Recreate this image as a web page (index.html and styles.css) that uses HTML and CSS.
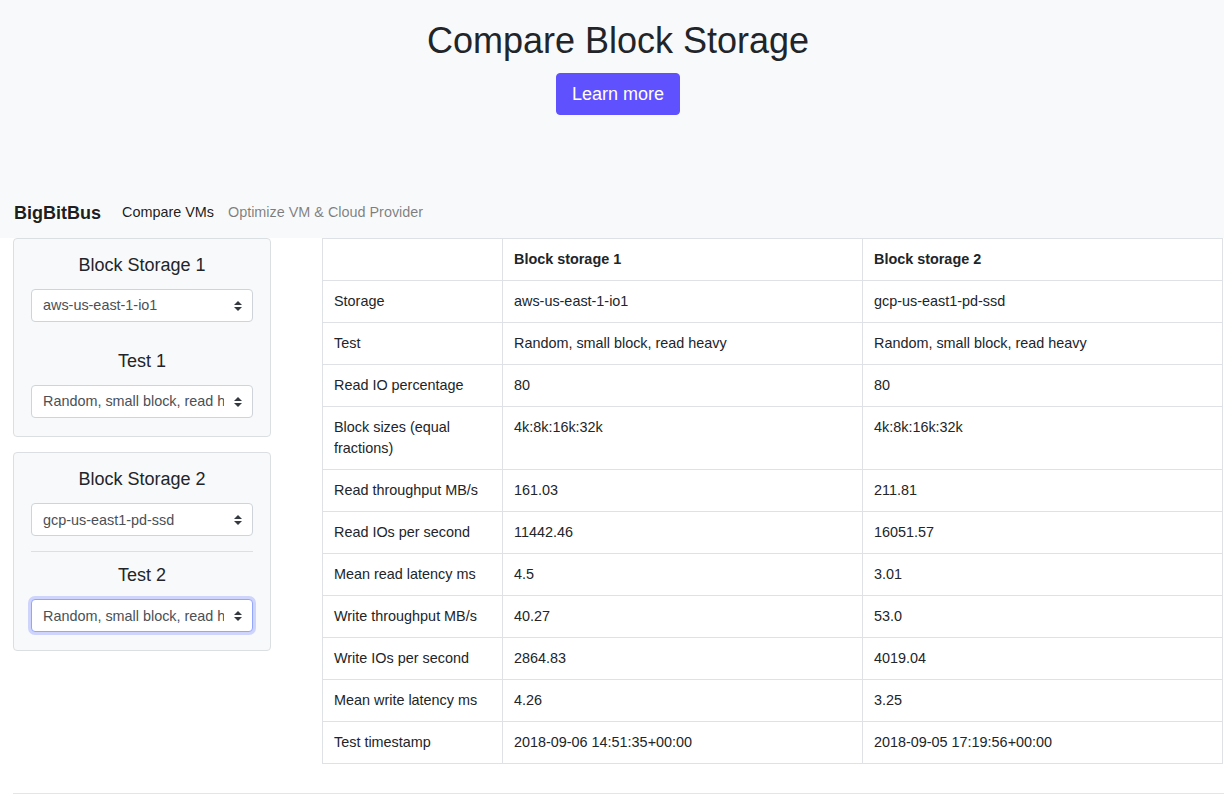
FILE: index.html
```html
<!DOCTYPE html>
<html lang="en">
<head>
<meta charset="utf-8">
<title>Compare Block Storage</title>
<link rel="stylesheet" href="styles.css">
</head>
<body>
<header class="hero">
  <h1 class="hero-title">Compare Block Storage</h1>
  <a class="btn-primary" href="#">Learn more</a>
</header>
<nav class="navbar">
  <a class="brand" href="#">BigBitBus</a>
  <a class="nav-link active" href="#">Compare VMs</a>
  <a class="nav-link" href="#">Optimize VM &amp; Cloud Provider</a>
</nav>
<main class="content">
  <aside class="sidebar">
    <section class="card">
      <h2 class="card-title">Block Storage 1</h2>
      <div class="select-wrap">
        <select class="custom-select"><option>aws-us-east-1-io1</option></select>
        <svg class="select-arrow" viewBox="0 0 4 5" width="8" height="10"><path d="M2 0L0 2h4zm0 5L0 3h4z"/></svg>
      </div>
      <hr class="divider hidden">
      <h2 class="card-title">Test 1</h2>
      <div class="select-wrap">
        <select class="custom-select"><option>Random, small block, read heavy</option></select>
        <svg class="select-arrow" viewBox="0 0 4 5" width="8" height="10"><path d="M2 0L0 2h4zm0 5L0 3h4z"/></svg>
      </div>
    </section>
    <section class="card">
      <h2 class="card-title">Block Storage 2</h2>
      <div class="select-wrap">
        <select class="custom-select"><option>gcp-us-east1-pd-ssd</option></select>
        <svg class="select-arrow" viewBox="0 0 4 5" width="8" height="10"><path d="M2 0L0 2h4zm0 5L0 3h4z"/></svg>
      </div>
      <hr class="divider">
      <h2 class="card-title">Test 2</h2>
      <div class="select-wrap">
        <select class="custom-select focused"><option>Random, small block, read heavy</option></select>
        <svg class="select-arrow" viewBox="0 0 4 5" width="8" height="10"><path d="M2 0L0 2h4zm0 5L0 3h4z"/></svg>
      </div>
    </section>
  </aside>
  <table class="compare-table">
    <colgroup><col class="col-label"><col class="col-val"><col class="col-val"></colgroup>
    <thead>
      <tr><th></th><th>Block storage 1</th><th>Block storage 2</th></tr>
    </thead>
    <tbody>
      <tr><td>Storage</td><td>aws-us-east-1-io1</td><td>gcp-us-east1-pd-ssd</td></tr>
      <tr><td>Test</td><td>Random, small block, read heavy</td><td>Random, small block, read heavy</td></tr>
      <tr><td>Read IO percentage</td><td>80</td><td>80</td></tr>
      <tr><td>Block sizes (equal fractions)</td><td>4k:8k:16k:32k</td><td>4k:8k:16k:32k</td></tr>
      <tr><td>Read throughput MB/s</td><td>161.03</td><td>211.81</td></tr>
      <tr><td>Read IOs per second</td><td>11442.46</td><td>16051.57</td></tr>
      <tr><td>Mean read latency ms</td><td>4.5</td><td>3.01</td></tr>
      <tr><td>Write throughput MB/s</td><td>40.27</td><td>53.0</td></tr>
      <tr><td>Write IOs per second</td><td>2864.83</td><td>4019.04</td></tr>
      <tr><td>Mean write latency ms</td><td>4.26</td><td>3.25</td></tr>
      <tr><td>Test timestamp</td><td>2018-09-06 14:51:35+00:00</td><td>2018-09-05 17:19:56+00:00</td></tr>
    </tbody>
  </table>
</main>
<hr class="footer-rule">
</body>
</html>
```
FILE: styles.css
```css
* { box-sizing: border-box; }

html, body {
  margin: 0;
  padding: 0;
}

body {
  font-family: "Liberation Sans", Arial, sans-serif;
  font-size: 14.4px;
  line-height: 1.5;
  color: #212529;
  background: #fff;
  overflow: hidden;
}

.hero {
  background: #f8f9fa;
  height: 188px;
  padding: 19px 0 0 12px;
  display: flex;
  flex-direction: column;
  align-items: center;
}

.hero-title {
  margin: 0;
  font-size: 36px;
  font-weight: 400;
  line-height: 43px;
  color: #212529;
}

.btn-primary {
  margin-top: 11px;
  display: inline-block;
  font-size: 18px;
  line-height: 26px;
  padding: 7px 15px;
  border: 1px solid #5f51fe;
  border-radius: 4px;
  background: #5f51fe;
  color: #fff;
  text-decoration: none;
}

.navbar {
  background: #f8f9fa;
  height: 50px;
  padding: 0 14px 1px;
  display: flex;
  align-items: center;
}

.brand {
  font-size: 18px;
  font-weight: 700;
  color: rgba(0, 0, 0, 0.9);
  text-decoration: none;
  margin-right: 14px;
  line-height: 26px;
}

.nav-link {
  padding: 0 7px;
  color: rgba(0, 0, 0, 0.5);
  text-decoration: none;
  font-size: 14.4px;
}

.nav-link.active {
  color: rgba(0, 0, 0, 0.9);
}

.content {
  display: flex;
  align-items: flex-start;
  gap: 51px;
  padding: 0 0 0 13px;
}

.sidebar {
  width: 258px;
  flex-shrink: 0;
}

.card {
  background: #f8f9fa;
  border: 1px solid #dcdfe2;
  border-radius: 4px;
  padding: 16px 17px 18px;
  margin-bottom: 15px;
  text-align: center;
}

.card-title {
  margin: 0 0 12px;
  font-size: 18px;
  font-weight: 400;
  line-height: 21.6px;
  color: #212529;
}

.select-wrap {
  position: relative;
}

.custom-select {
  display: block;
  width: 100%;
  height: 33.5px;
  padding: 0 28px 0 11px;
  font-family: "Liberation Sans", Arial, sans-serif;
  font-size: 14.4px;
  color: #495057;
  background: #fff;
  border: 1px solid #ced4da;
  border-radius: 4px;
  -webkit-appearance: none;
  appearance: none;
  outline: none;
}

.custom-select.focused {
  border-color: #93a6ff;
  box-shadow: 0 0 0 3px rgba(98, 120, 255, 0.28);
}

.select-arrow {
  position: absolute;
  right: 11px;
  top: 12px;
  fill: #343a40;
  pointer-events: none;
}

.divider {
  border: 0;
  border-top: 1px solid rgba(0, 0, 0, 0.1);
  margin: 14.5px 0 13.5px;
}

.divider.hidden {
  border-top-color: transparent;
}

.compare-table {
  flex-shrink: 0;
  width: 900px;
  border-collapse: collapse;
  table-layout: fixed;
  font-size: 14.4px;
  line-height: 21px;
}

.col-label { width: 180px; }
.col-val { width: 360px; }

.compare-table th,
.compare-table td {
  border: 1px solid #dee2e6;
  padding: 10px 11px;
  text-align: left;
  vertical-align: top;
}

.compare-table th {
  font-weight: 700;
}

.footer-rule {
  border: 0;
  border-top: 1px solid rgba(0, 0, 0, 0.1);
  margin: 29px 0 0 13px;
}
```
